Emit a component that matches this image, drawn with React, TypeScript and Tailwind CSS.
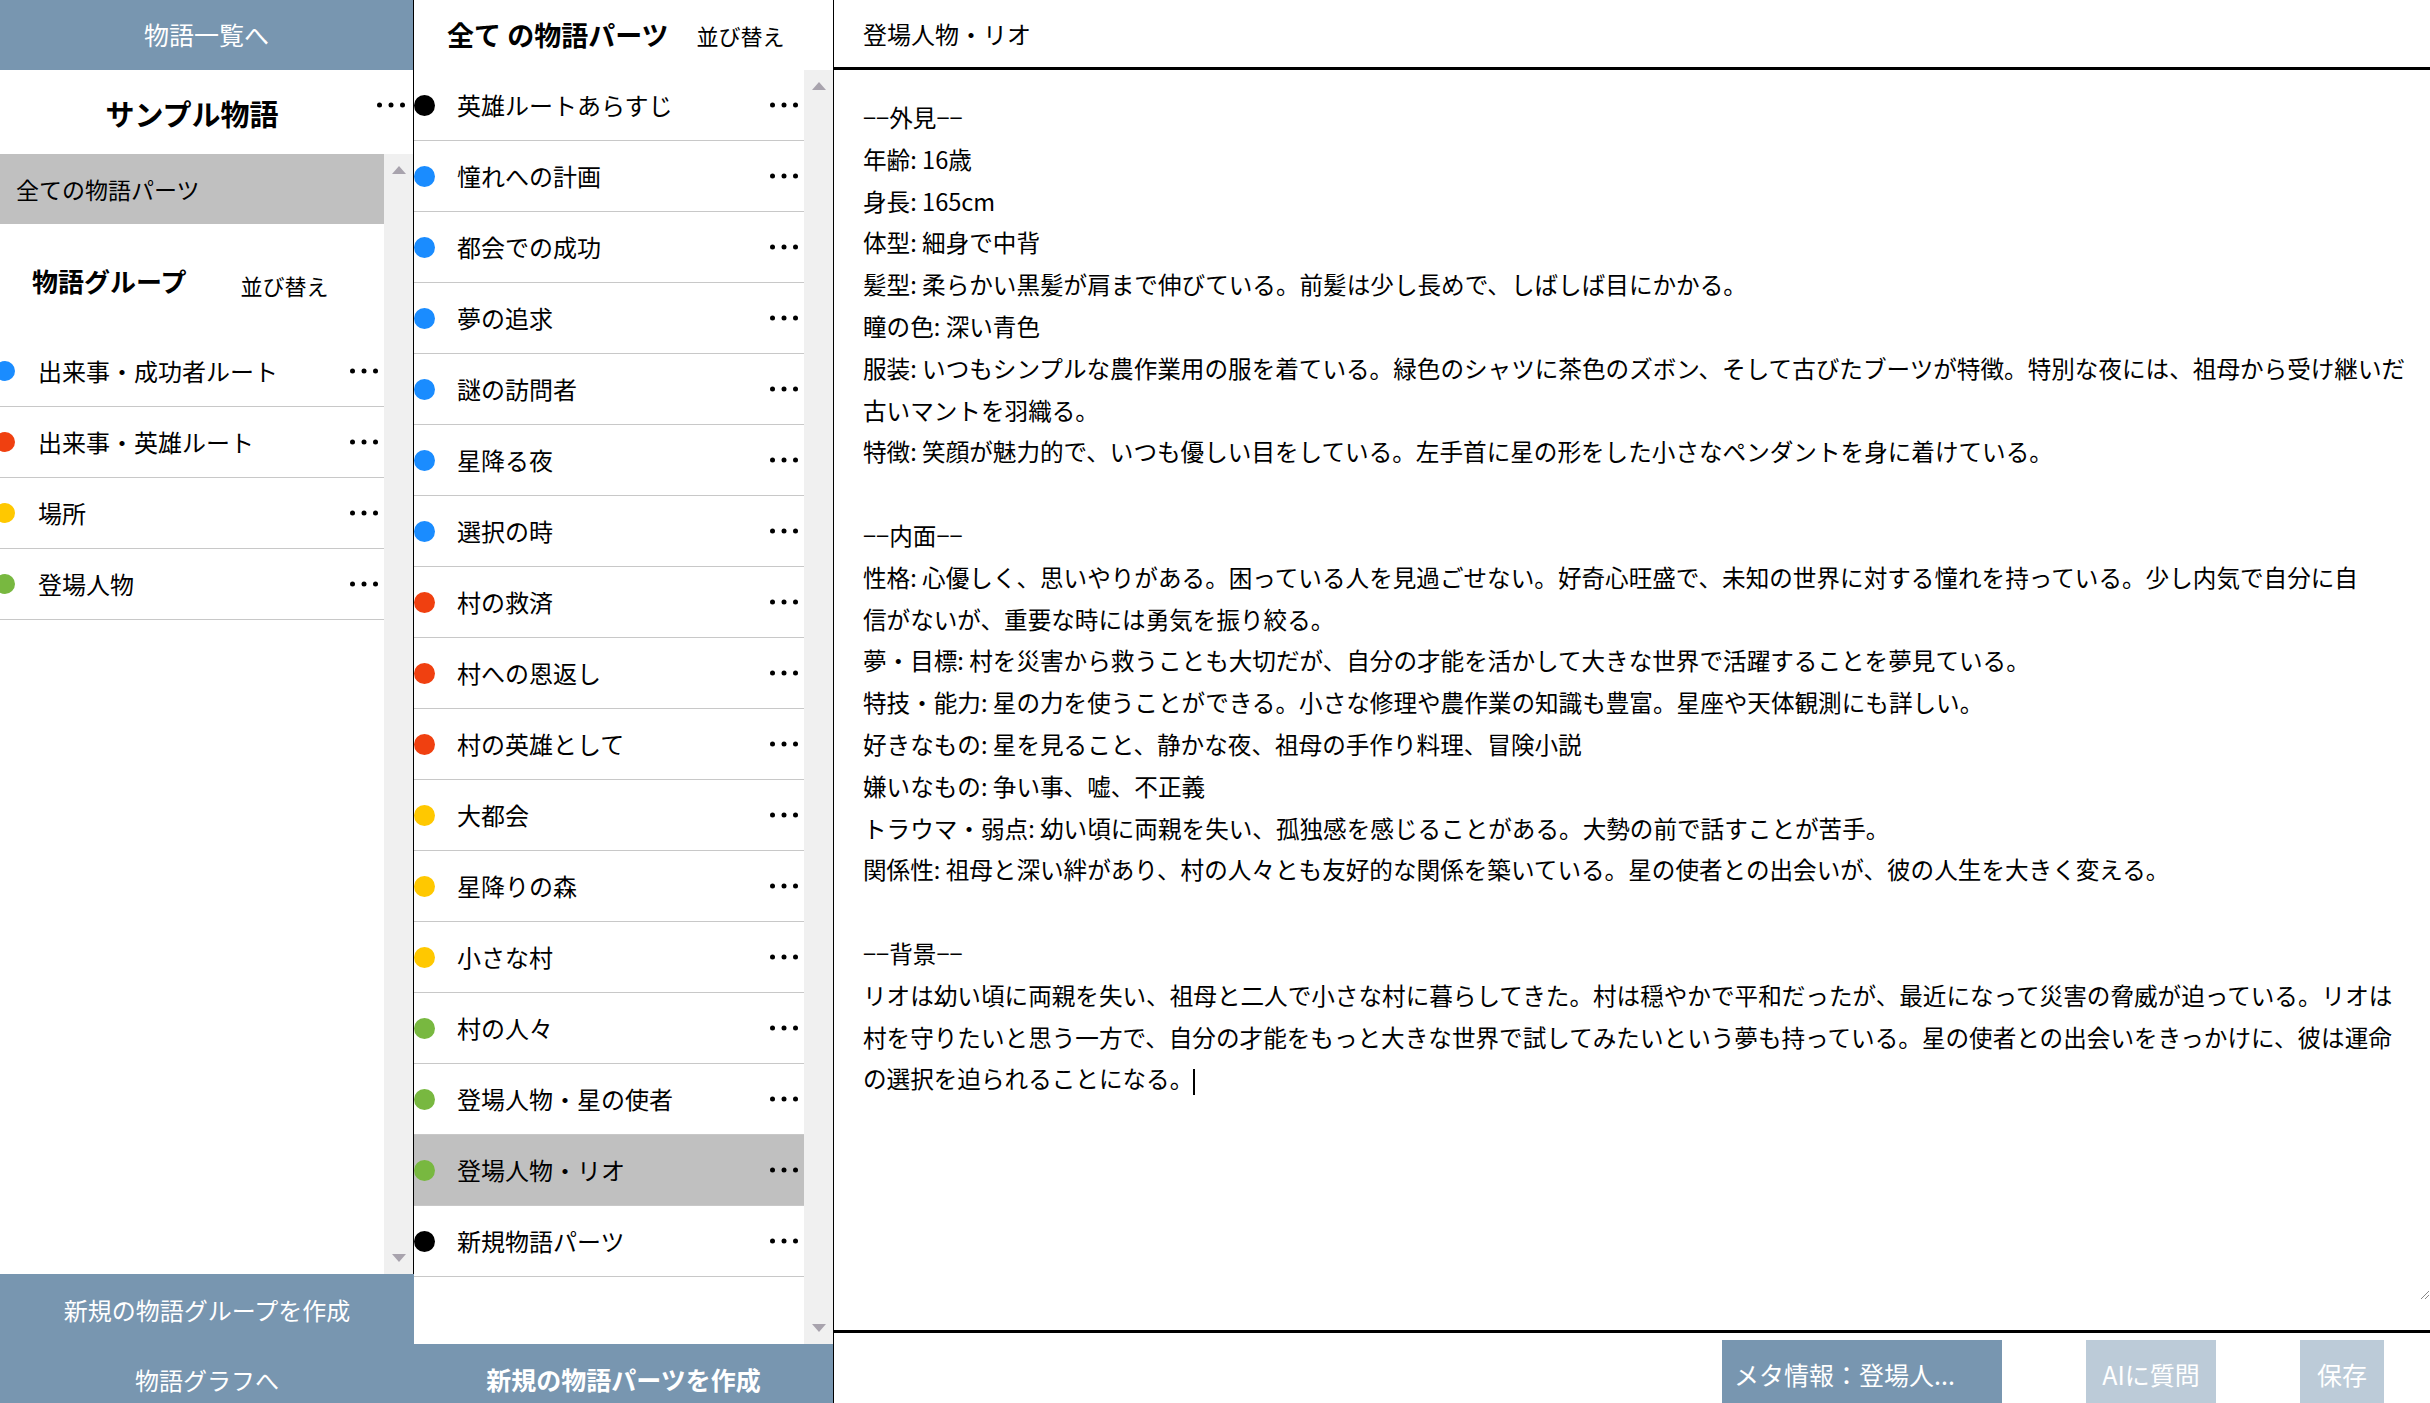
import React from "react";

type Part = { name: string; color: string; selected?: boolean };

const BLUE = "#1a8cff";
const RED = "#f04010";
const YELLOW = "#ffc800";
const GREEN = "#78b840";
const BLACK = "#000000";

const groups: Part[] = [
  { name: "出来事・成功者ルート", color: BLUE },
  { name: "出来事・英雄ルート", color: RED },
  { name: "場所", color: YELLOW },
  { name: "登場人物", color: GREEN },
];

const parts: Part[] = [
  { name: "英雄ルートあらすじ", color: BLACK },
  { name: "憧れへの計画", color: BLUE },
  { name: "都会での成功", color: BLUE },
  { name: "夢の追求", color: BLUE },
  { name: "謎の訪問者", color: BLUE },
  { name: "星降る夜", color: BLUE },
  { name: "選択の時", color: BLUE },
  { name: "村の救済", color: RED },
  { name: "村への恩返し", color: RED },
  { name: "村の英雄として", color: RED },
  { name: "大都会", color: YELLOW },
  { name: "星降りの森", color: YELLOW },
  { name: "小さな村", color: YELLOW },
  { name: "村の人々", color: GREEN },
  { name: "登場人物・星の使者", color: GREEN },
  { name: "登場人物・リオ", color: GREEN, selected: true },
  { name: "新規物語パーツ", color: BLACK },
];

const lines = [
  "−−外見−−",
  "年齢: 16歳",
  "身長: 165cm",
  "体型: 細身で中背",
  "髪型: 柔らかい黒髪が肩まで伸びている。前髪は少し長めで、しばしば目にかかる。",
  "瞳の色: 深い青色",
  "服装: いつもシンプルな農作業用の服を着ている。緑色のシャツに茶色のズボン、そして古びたブーツが特徴。特別な夜には、祖母から受け継いだ",
  "古いマントを羽織る。",
  "特徴: 笑顔が魅力的で、いつも優しい目をしている。左手首に星の形をした小さなペンダントを身に着けている。",
  "",
  "−−内面−−",
  "性格: 心優しく、思いやりがある。困っている人を見過ごせない。好奇心旺盛で、未知の世界に対する憧れを持っている。少し内気で自分に自",
  "信がないが、重要な時には勇気を振り絞る。",
  "夢・目標: 村を災害から救うことも大切だが、自分の才能を活かして大きな世界で活躍することを夢見ている。",
  "特技・能力: 星の力を使うことができる。小さな修理や農作業の知識も豊富。星座や天体観測にも詳しい。",
  "好きなもの: 星を見ること、静かな夜、祖母の手作り料理、冒険小説",
  "嫌いなもの: 争い事、嘘、不正義",
  "トラウマ・弱点: 幼い頃に両親を失い、孤独感を感じることがある。大勢の前で話すことが苦手。",
  "関係性: 祖母と深い絆があり、村の人々とも友好的な関係を築いている。星の使者との出会いが、彼の人生を大きく変える。",
  "",
  "−−背景−−",
  "リオは幼い頃に両親を失い、祖母と二人で小さな村に暮らしてきた。村は穏やかで平和だったが、最近になって災害の脅威が迫っている。リオは",
  "村を守りたいと思う一方で、自分の才能をもっと大きな世界で試してみたいという夢も持っている。星の使者との出会いをきっかけに、彼は運命",
  "の選択を迫られることになる。",
];

function Dots() {
  return (
    <svg width="28" height="6" viewBox="0 0 28 6" className="shrink-0">
      <circle cx="2.5" cy="3" r="2.5" fill="#000" />
      <circle cx="14" cy="3" r="2.5" fill="#000" />
      <circle cx="25.5" cy="3" r="2.5" fill="#000" />
    </svg>
  );
}

function Scrollbar() {
  return (
    <div className="flex w-[29px] shrink-0 flex-col items-center justify-between bg-[#f0f0f0] py-[12px]">
      <svg width="14" height="8" viewBox="0 0 14 8">
        <polygon points="7,0 14,8 0,8" fill="#a8a3ad" />
      </svg>
      <svg width="14" height="8" viewBox="0 0 14 8">
        <polygon points="0,0 14,0 7,8" fill="#a8a3ad" />
      </svg>
    </div>
  );
}

export default function App() {
  return (
    <div className="flex h-[1403px] w-[2430px] overflow-hidden bg-white font-['Noto_Sans_CJK_JP',sans-serif] text-black">
      {/* Left: story groups */}
      <div className="flex h-full w-[414px] shrink-0 flex-col overflow-hidden">
        <div className="flex flex-1 flex-col border-r border-black">
          <div className="flex h-[70px] items-center justify-center bg-[#7896b0] text-[25px] text-white">
            物語一覧へ
          </div>
          <div className="relative flex h-[84px] items-center">
            <div className="w-[384px] pt-[4px] text-center text-[29px] font-bold">サンプル物語</div>
            <div className="absolute right-[8px] top-[32px]">
              <Dots />
            </div>
          </div>
          <div className="flex h-[1120px]">
            <div className="w-[384px]">
              <div className="flex h-[70px] items-center bg-[#c0c0c0] pl-[16px] text-[23px]">
                全ての物語パーツ
              </div>
              <div className="flex h-[112px] items-center pl-[32px]">
                <span className="text-[26px] font-bold">物語グループ</span>
                <span className="ml-[54px] mt-[10px] text-[22px]">並び替え</span>
              </div>
              {groups.map((g) => (
                <div
                  key={g.name}
                  className="flex h-[71px] items-center border-b border-[#c8c8c8] pr-[6px]"
                >
                  <span
                    className="ml-[-5px] h-[20px] w-[20px] shrink-0 rounded-full"
                    style={{ backgroundColor: g.color }}
                  />
                  <span className="ml-[23px] flex-1 text-[24px]">{g.name}</span>
                  <Dots />
                </div>
              ))}
            </div>
            <Scrollbar />
          </div>
        </div>
        <div className="flex h-[71px] shrink-0 items-center justify-center bg-[#7896b0] text-[24px] text-white">
          新規の物語グループを作成
        </div>
        <div className="flex h-[70px] shrink-0 items-center justify-center bg-[#7896b0] text-[24px] text-white">
          物語グラフへ
        </div>
      </div>

      {/* Middle: story parts */}
      <div className="flex h-full w-[419px] shrink-0 flex-col overflow-hidden">
        <div className="flex h-[70px] shrink-0 items-center pl-[33px]">
          <span className="text-[27px] font-bold">全て の物語パーツ</span>
          <span className="ml-[28px] text-[22px]">並び替え</span>
        </div>
        <div className="flex h-[1274px] shrink-0">
          <div className="w-[390px]">
            {parts.map((p) => (
              <div
                key={p.name}
                className={`flex h-[71px] items-center border-b border-[#c8c8c8] pr-[6px] ${
                  p.selected ? "bg-[#c0c0c0]" : ""
                }`}
              >
                <span
                  className="h-[21px] w-[21px] shrink-0 rounded-full"
                  style={{ backgroundColor: p.color }}
                />
                <span className="ml-[22px] flex-1 text-[24px]">{p.name}</span>
                <Dots />
              </div>
            ))}
          </div>
          <Scrollbar />
        </div>
        <div className="flex h-[72px] shrink-0 items-center justify-center bg-[#7896b0] text-[25px] font-semibold text-white">
          新規の物語パーツを作成
        </div>
      </div>

      {/* Right: editor */}
      <div className="flex h-full flex-1 flex-col border-l border-black">
        <div className="flex h-[67px] shrink-0 items-center pl-[29px] text-[24px]">
          登場人物・リオ
        </div>
        <div className="h-[3px] shrink-0 bg-black" />
        <div className="relative h-[1260px] shrink-0 overflow-hidden pl-[29px] pt-[27px] text-[23.6px] leading-[41.8px]">
          {lines.map((l, i) => (
            <div key={i} className="h-[41.8px] whitespace-nowrap">
              {l}
              {i === lines.length - 1 && (
                <span className="inline-block h-[26px] w-[2px] bg-black align-middle" />
              )}
            </div>
          ))}
          <svg
            width="10"
            height="10"
            viewBox="0 0 10 10"
            className="absolute bottom-[30px] right-[0px]"
          >
            <line x1="1" y1="9" x2="9" y2="1" stroke="#888" strokeWidth="1" />
            <line x1="5" y1="9" x2="9" y2="5" stroke="#888" strokeWidth="1" />
          </svg>
        </div>
        <div className="h-[3px] shrink-0 bg-black" />
        <div className="flex flex-1 items-start pl-[888px] pt-[7px]">
          <div className="flex h-[70px] w-[280px] shrink-0 items-center whitespace-nowrap bg-[#7896b0] pl-[12px] text-[25px] text-white">
            メタ情報：登場人...
          </div>
          <div className="ml-[84px] flex h-[70px] w-[130px] shrink-0 items-center justify-center bg-[#bccbd8] text-[25px] text-white">
            AIに質問
          </div>
          <div className="ml-[84px] flex h-[70px] w-[84px] shrink-0 items-center justify-center bg-[#bccbd8] text-[25px] text-white">
            保存
          </div>
        </div>
      </div>
    </div>
  );
}
